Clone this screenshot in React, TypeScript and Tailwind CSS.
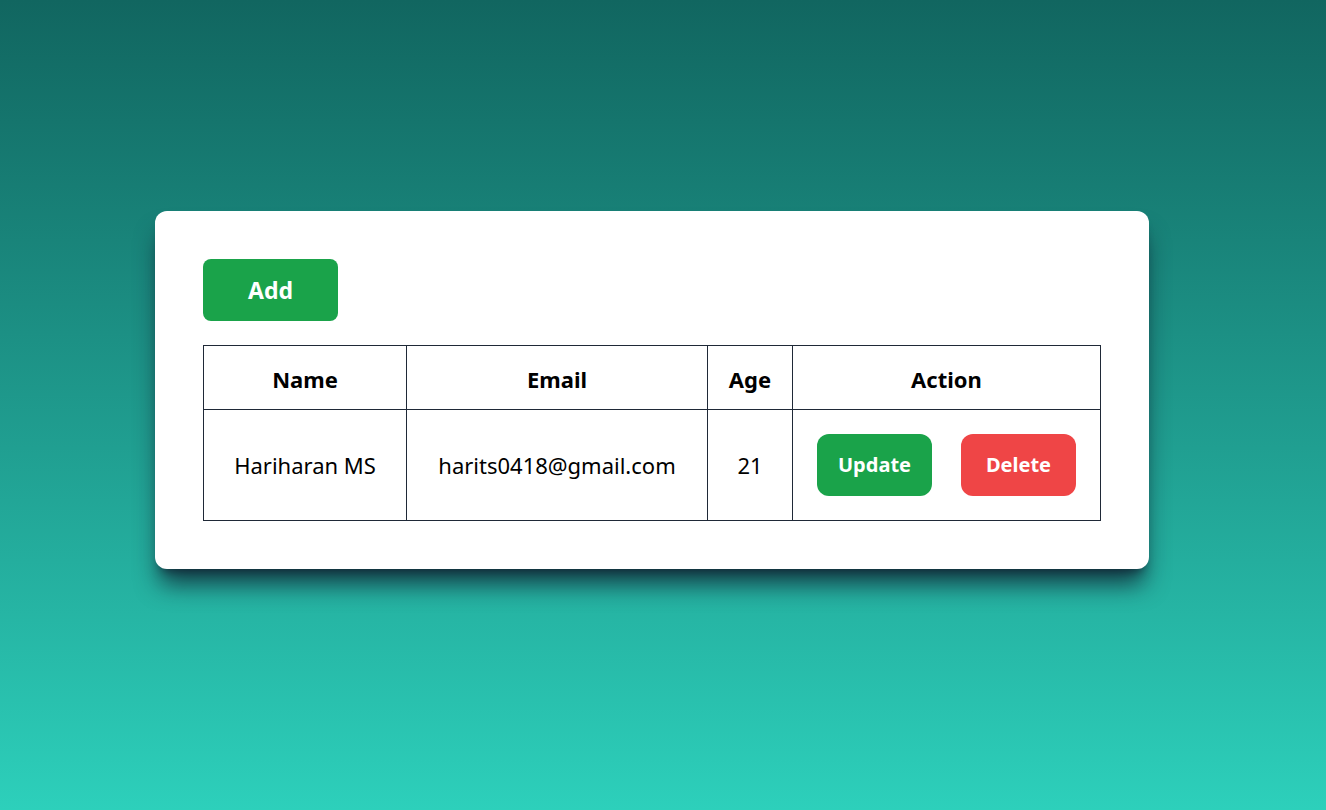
import React from 'react';

interface User {
  name: string;
  email: string;
  age: number;
}

const users: User[] = [{ name: 'Hariharan MS', email: 'harits0418@gmail.com', age: 21 }];

const App = () => {
  return (
    <div
      className="min-h-screen w-full flex items-center justify-center pr-[22px] pb-[30px] bg-gradient-to-b from-[#116660] to-[#2dd0bb]"
      style={{ fontFamily: '"Noto Sans", "Open Sans", sans-serif' }}
    >
      <div className="w-[994px] bg-white rounded-xl p-12 shadow-[0_20px_25px_-5px_rgba(15,23,42,0.75),0_8px_10px_-6px_rgba(15,23,42,0.6)]">
        <button className="w-[135px] h-[62px] rounded-lg bg-[#1aa34a] text-white text-[23px] font-bold">
          Add
        </button>

        <table className="mt-6 w-full border-collapse text-[22px] text-black">
          <thead>
            <tr className="h-16">
              <th className="w-[203px] border border-[#1f2937] font-bold pt-1">Name</th>
              <th className="w-[301px] border border-[#1f2937] font-bold pt-1">Email</th>
              <th className="w-[85px] border border-[#1f2937] font-bold pt-1">Age</th>
              <th className="border border-[#1f2937] font-bold pt-1">Action</th>
            </tr>
          </thead>
          <tbody>
            {users.map((user, index) => (
              <tr key={index} className="h-[111px]">
                <td className="border border-[#1f2937] text-center">{user.name}</td>
                <td className="border border-[#1f2937] text-center">{user.email}</td>
                <td className="border border-[#1f2937] text-center">{user.age}</td>
                <td className="border border-[#1f2937]">
                  <div className="flex justify-center gap-[29px]">
                    <button className="w-[115px] h-[62px] rounded-xl bg-[#1aa34a] text-white text-xl font-bold">
                      Update
                    </button>
                    <button className="w-[115px] h-[62px] rounded-xl bg-[#ef4546] text-white text-xl font-bold">
                      Delete
                    </button>
                  </div>
                </td>
              </tr>
            ))}
          </tbody>
        </table>
      </div>
    </div>
  );
};

export default App;
